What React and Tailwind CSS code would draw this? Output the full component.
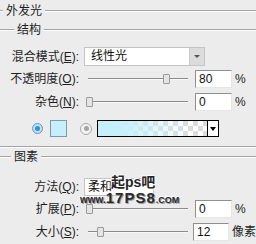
const GroupHead = ({ title, lead, className = '' }) => (
  <div className={`flex items-center ${className}`}>
    <div className={`${lead} border-t border-t-[#a3a3a3] border-b border-b-white`} />
    <span className="ml-[3px] mr-[3px] text-[12px] leading-none text-[#1e1e1e]">{title}</span>
    <div className="flex-1 border-t border-t-[#a3a3a3] border-b border-b-white" />
  </div>
);

const Label = ({ text, k }) => (
  <div className="w-[79px] shrink-0 text-right text-[12px] leading-none text-[#1e1e1e]">
    {text}(<span className="underline">{k}</span>):
  </div>
);

const Slider = ({ pos }) => (
  <div className="relative ml-[7px] w-[104px] h-full flex items-center">
    <div className="ml-[2px] w-[100px] border-t border-t-[#8c8c8c] border-b border-b-[#f8f8f8]" />
    <div
      className="absolute top-1/2 -translate-y-1/2 w-[7px] h-[10px] bg-[#e4e4e4] border border-[#9a9a9a] rounded-[1px]"
      style={{ left: pos }}
    />
  </div>
);

const NumBox = ({ value, unit }) => (
  <>
    <div className="ml-[5px] w-[37px] h-[18px] bg-white border border-t-[#8f8f8f] border-l-[#8f8f8f] border-r-[#e6e6e6] border-b-[#e6e6e6] pl-[3px] text-[12px] leading-[16px] text-[#111]">
      {value}
    </div>
    <span className="ml-[3px] text-[12px] leading-none text-[#1e1e1e] whitespace-nowrap">{unit}</span>
  </>
);

export default function App() {
  return (
    <div className="relative w-[256px] h-[244px] overflow-hidden bg-[#ececec] font-['Liberation_Sans','Noto_Sans_CJK_SC',sans-serif]">
      <GroupHead title="外发光" lead="w-[3px]" className="h-[21px]" />
      <GroupHead title="结构" lead="w-[14px]" className="h-[17px]" />

      {/* 混合模式 */}
      <div className="mt-[9px] flex items-center h-[19px]">
        <Label text="混合模式" k="E" />
        <div className="ml-[5px] w-[121px] h-[19px] flex bg-white border border-[#c4c4c4]">
          <span className="flex-1 pl-[6px] text-[12px] leading-[17px] text-[#111]">线性光</span>
          <div className="w-[15px] h-full bg-[#dcdcdc] border-l border-[#c8c8c8] flex items-center justify-center">
            <div className="w-0 h-0 border-l-[3px] border-r-[3px] border-t-[3px] border-l-transparent border-r-transparent border-t-[#555]" />
          </div>
        </div>
      </div>

      {/* 不透明度 */}
      <div className="mt-[4px] flex items-center h-[18px]">
        <Label text="不透明度" k="O" />
        <Slider pos="77px" />
        <NumBox value="80" unit="%" />
      </div>

      {/* 杂色 */}
      <div className="mt-[5px] flex items-center h-[18px]">
        <Label text="杂色" k="N" />
        <Slider pos="0px" />
        <NumBox value="0" unit="%" />
      </div>

      {/* color / gradient */}
      <div className="mt-[9px] flex items-center h-[17px] pl-[32px]">
        <div className="w-[11px] h-[11px] rounded-full border border-[#5a9ccc] bg-[#bfe0f5] flex items-center justify-center">
          <div className="w-[5px] h-[5px] rounded-full bg-[#3b8fd0]" />
        </div>
        <div className="ml-[7px] w-[17px] h-[17px] bg-[#c5f0fb] border border-[#7e9aa2]" />
        <div className="ml-[13px] w-[12px] h-[12px] rounded-full border border-[#a9a9a9] bg-[#f2f2f2] flex items-center justify-center">
          <div className="w-[5px] h-[5px] rounded-full bg-[#a4a4a4]" />
        </div>
        <div className="ml-[5px] w-[122px] h-[17px] flex border border-black">
          <div className="relative flex-1 bg-[repeating-conic-gradient(#dcdcdc_0%_25%,#ffffff_0%_50%)] bg-[length:10px_10px]">
            <div className="absolute inset-0 bg-gradient-to-r from-[#c5f0fb] from-20% to-transparent to-85%" />
          </div>
          <div className="w-[11px] h-full bg-white border-l border-black flex items-center justify-center">
            <div className="w-0 h-0 border-l-[3px] border-r-[3px] border-t-[4px] border-l-transparent border-r-transparent border-t-black" />
          </div>
        </div>
      </div>

      <div className="mt-[9px] border-t border-t-[#a3a3a3] border-b border-b-white" />
      <GroupHead title="图素" lead="w-[11px]" className="h-[17px]" />

      {/* 方法 */}
      <div className="mt-[13px] flex items-center h-[18px]">
        <Label text="方法" k="Q" />
        <div className="ml-[5px] w-[70px] h-[18px] bg-white border border-[#c4c4c4] pl-[3px] text-[12px] leading-[16px] text-[#111]">
          柔和
        </div>
      </div>

      {/* 扩展 */}
      <div className="mt-[4px] flex items-center h-[18px]">
        <Label text="扩展" k="P" />
        <Slider pos="0px" />
        <NumBox value="0" unit="%" />
      </div>

      {/* 大小 */}
      <div className="mt-[5px] flex items-center h-[18px]">
        <Label text="大小" k="S" />
        <Slider pos="11px" />
        <NumBox value="12" unit="像素" />
      </div>

      {/* watermark over the dialog */}
      <div className="absolute left-[111px] top-[175px] text-[14px] leading-none font-bold text-[#262626] [text-shadow:1px_1px_0_#fff,-1px_-1px_0_#fff]">
        起ps吧
      </div>
      <div className="absolute left-[80px] top-[190px] flex items-end leading-none font-black text-[#2b2b2b] [text-shadow:1px_1px_0_#9a9a9a,-1px_-1px_0_#fff]">
        <span className="text-[10px]">www.</span>
        <span className="text-[15px] tracking-[1px]">17PS8</span>
        <span className="text-[9px]">.COM</span>
      </div>
    </div>
  );
}
